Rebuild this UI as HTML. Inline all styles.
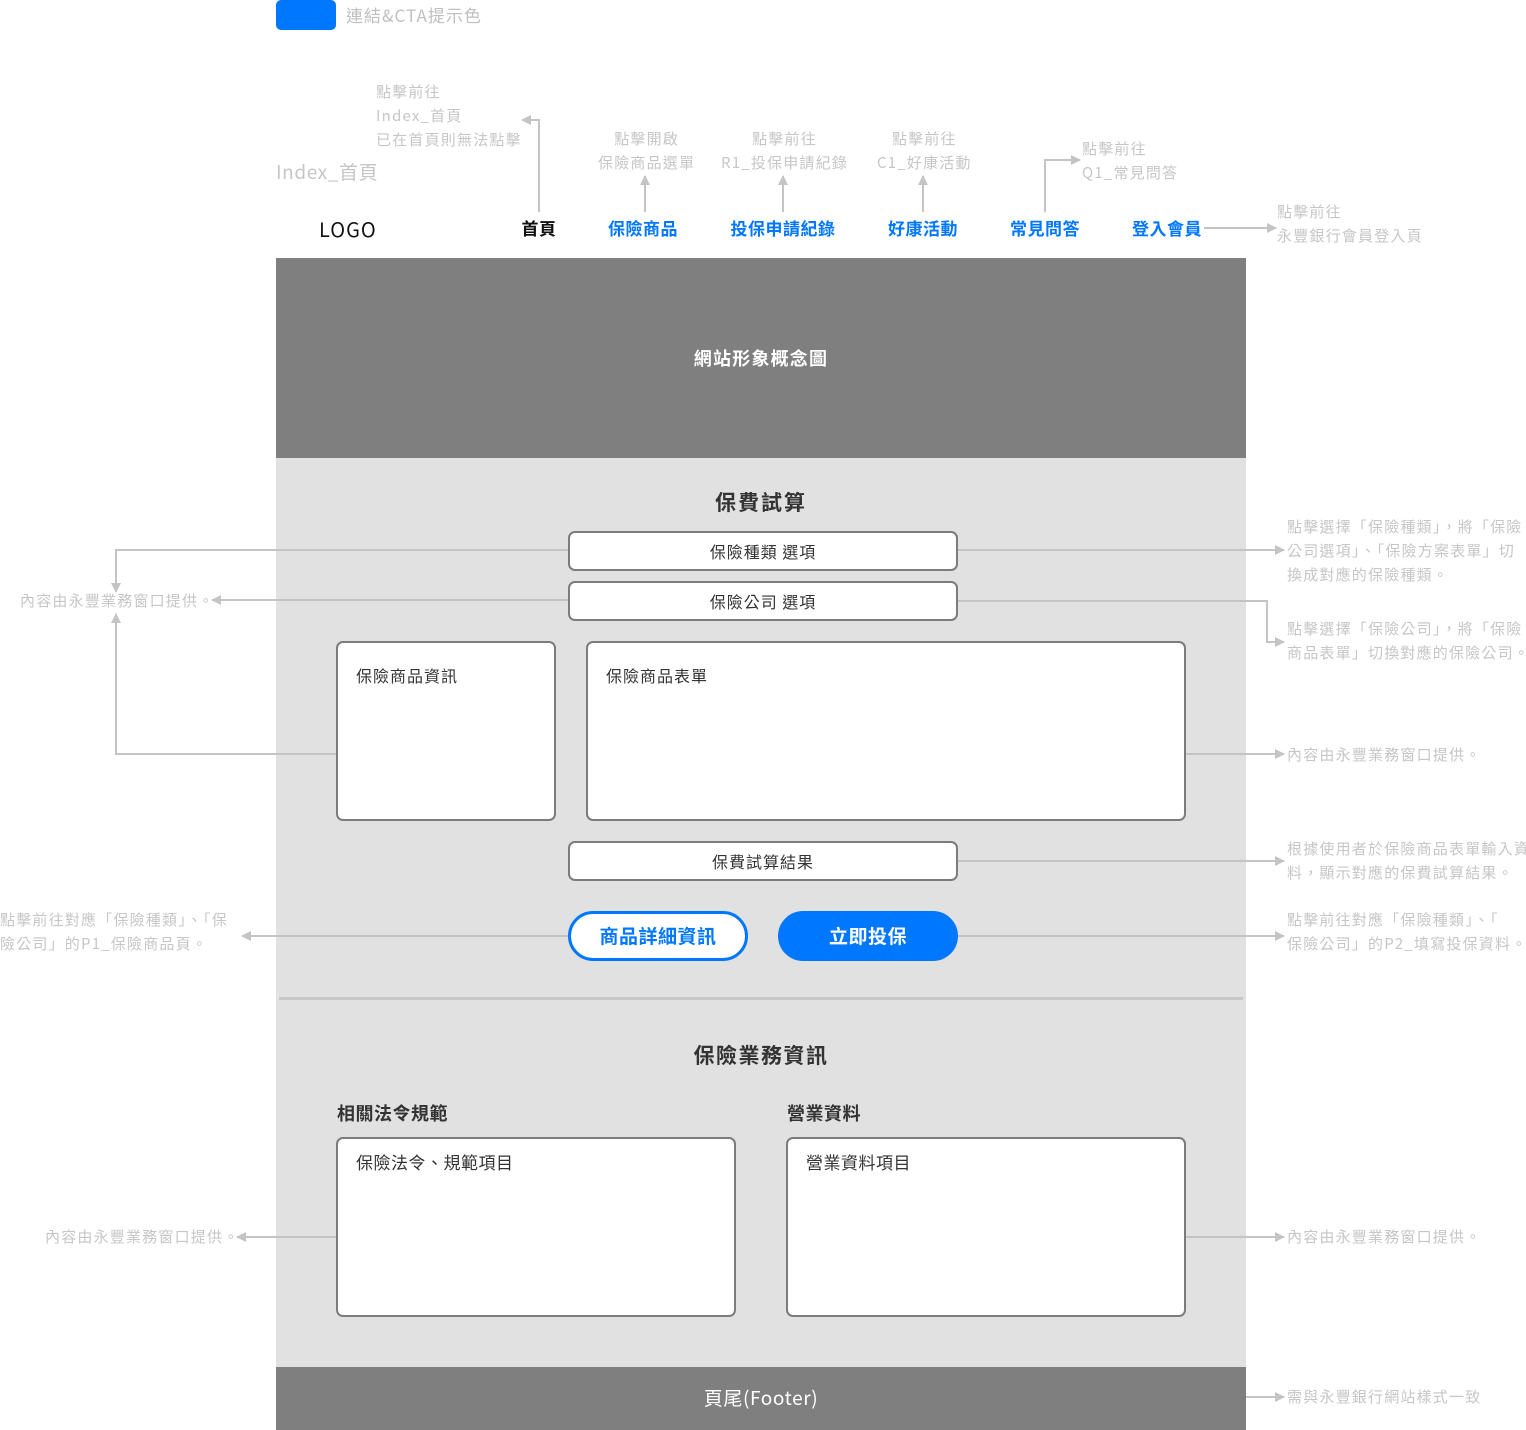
<!DOCTYPE html>
<html><head><meta charset="utf-8"><style>
*{margin:0;padding:0;box-sizing:border-box}
body{width:1526px;height:1430px;position:relative;background:#fff;font-family:"Noto Sans CJK TC","Liberation Sans",sans-serif;overflow:hidden}
.a{position:absolute;white-space:nowrap}
.n{color:#c6c6c6;font-size:15px;line-height:24px;letter-spacing:1.2px}
.nav{font-size:17px;font-weight:bold;color:#0077ff;top:216px;line-height:24px;transform:translateX(-50%);letter-spacing:.5px}
.box{position:absolute;background:#fff;border:2px solid #7c7c7c;border-radius:7px}
.sel{font-size:16px;color:#333;text-align:center;line-height:36px;letter-spacing:1px}
.bt{font-size:16px;color:#333;padding:20px 0 0 18px;line-height:24px;letter-spacing:1px}
</style></head><body>
<div class="a" style="left:276px;top:0;width:60px;height:30px;background:#0077ff;border-radius:5px"></div>
<div class="a" style="left:346px;top:4px;font-size:17px;color:#c0c0c0;line-height:22px;letter-spacing:1px">連結&amp;CTA提示色</div>
<div class="a n" style="left:376px;top:80px">點擊前往<br>Index_首頁<br>已在首頁則無法點擊</div>
<div class="a" style="left:276px;top:159px;font-size:19px;color:#c6c6c6;line-height:26px;letter-spacing:.6px">Index_首頁</div>
<div class="a n" style="left:598px;top:127px;text-align:center">點擊開啟<br>保險商品選單</div>
<div class="a n" style="left:721px;top:127px;text-align:center">點擊前往<br>R1_投保申請紀錄</div>
<div class="a n" style="left:877px;top:127px;text-align:center">點擊前往<br>C1_好康活動</div>
<div class="a n" style="left:1082px;top:137px">點擊前往<br>Q1_常見問答</div>
<div class="a n" style="left:1277px;top:200px">點擊前往<br>永豐銀行會員登入頁</div>
<div class="a" style="left:319px;top:216px;font-size:20px;color:#111;line-height:26px;letter-spacing:1px">LOGO</div>
<div class="a nav" style="left:539px;color:#111">首頁</div>
<div class="a nav" style="left:643px">保險商品</div>
<div class="a nav" style="left:783px">投保申請紀錄</div>
<div class="a nav" style="left:923px">好康活動</div>
<div class="a nav" style="left:1045px">常見問答</div>
<div class="a nav" style="left:1167px">登入會員</div>

<div class="a" style="left:276px;top:258px;width:970px;height:200px;background:#7f7f7f;color:#fff;font-size:18px;font-weight:bold;text-align:center;line-height:200px;letter-spacing:1.2px">網站形象概念圖</div>
<div class="a" style="left:276px;top:458px;width:970px;height:909px;background:#e1e1e1"></div>
<div class="a" style="left:279px;top:997px;width:964px;height:3px;background:#c8c8c8"></div>
<div class="a" style="left:276px;top:1367px;width:970px;height:63px;background:#7f7f7f;color:#fff;font-size:19px;text-align:center;line-height:62px;letter-spacing:.6px">頁尾(Footer)</div>

<svg class="a" style="left:0;top:0" width="1526" height="1430">
<defs><marker id="m" markerWidth="10" markerHeight="10" refX="9" refY="5" orient="auto" markerUnits="userSpaceOnUse"><path d="M0,0L10,5L0,10z" fill="#c4c4c4"/></marker></defs>
<g stroke="#c4c4c4" stroke-width="2" fill="none" marker-end="url(#m)">
<path d="M539,212V120H522"/>
<path d="M645,212V176"/>
<path d="M783,212V176"/>
<path d="M923,212V176"/>
<path d="M1045,212V160H1080"/>
<path d="M1204,228H1276"/>
<path d="M569,550H116V592"/>
<path d="M957,550H1284"/>
<path d="M569,600H212"/>
<path d="M957,601H1267V642H1284"/>
<path d="M337,754H116V614"/>
<path d="M1185,754H1284"/>
<path d="M957,861H1284"/>
<path d="M569,936H242"/>
<path d="M957,936H1284"/>
<path d="M337,1237H237"/>
<path d="M1185,1237H1284"/>
<path d="M1246,1397H1284"/>
</g></svg>

<div class="a n" style="left:20px;top:589px">內容由永豐業務窗口提供。</div>
<div class="a n" style="left:1287px;top:515px">點擊選擇「保險種類」，將「保險<br>公司選項」、「保險方案表單」切<br>換成對應的保險種類。</div>
<div class="a n" style="left:1287px;top:617px">點擊選擇「保險公司」，將「保險<br>商品表單」切換對應的保險公司。</div>
<div class="a n" style="left:1287px;top:743px">內容由永豐業務窗口提供。</div>
<div class="a n" style="left:1287px;top:837px">根據使用者於保險商品表單輸入資<br>料，顯示對應的保費試算結果。</div>
<div class="a n" style="left:1287px;top:908px">點擊前往對應「保險種類」、「<br>保險公司」的P2_填寫投保資料。</div>
<div class="a n" style="left:0;top:908px">點擊前往對應「保險種類」、「保<br>險公司」的P1_保險商品頁。</div>
<div class="a n" style="left:45px;top:1225px">內容由永豐業務窗口提供。</div>
<div class="a n" style="left:1287px;top:1225px">內容由永豐業務窗口提供。</div>
<div class="a n" style="left:1287px;top:1385px">需與永豐銀行網站樣式一致</div>

<div class="a" style="left:276px;top:488px;width:970px;text-align:center;font-size:21px;font-weight:bold;color:#333;line-height:28px;letter-spacing:2px">保費試算</div>
<div class="box sel" style="left:568px;top:531px;width:390px;height:40px">保險種類 選項</div>
<div class="box sel" style="left:568px;top:581px;width:390px;height:40px">保險公司 選項</div>
<div class="box bt" style="left:336px;top:641px;width:220px;height:180px">保險商品資訊</div>
<div class="box bt" style="left:586px;top:641px;width:600px;height:180px">保險商品表單</div>
<div class="box sel" style="left:568px;top:841px;width:390px;height:40px">保費試算結果</div>
<div class="a" style="left:568px;top:911px;width:180px;height:50px;border:3px solid #0077ff;border-radius:25px;background:#fff;color:#0077ff;font-size:19px;font-weight:bold;text-align:center;line-height:44px;letter-spacing:.5px">商品詳細資訊</div>
<div class="a" style="left:778px;top:911px;width:180px;height:50px;border-radius:25px;background:#0077ff;color:#fff;font-size:19px;font-weight:bold;text-align:center;line-height:50px;letter-spacing:.5px">立即投保</div>

<div class="a" style="left:276px;top:1041px;width:970px;text-align:center;font-size:21px;font-weight:bold;color:#333;line-height:28px;letter-spacing:1.5px">保險業務資訊</div>
<div class="a" style="left:337px;top:1101px;font-size:18px;font-weight:bold;color:#333;line-height:24px;letter-spacing:.5px">相關法令規範</div>
<div class="a" style="left:787px;top:1101px;font-size:18px;font-weight:bold;color:#333;line-height:24px;letter-spacing:.5px">營業資料</div>
<div class="box bt" style="left:336px;top:1137px;width:400px;height:180px;padding-top:11px;font-size:17px;letter-spacing:.5px">保險法令、規範項目</div>
<div class="box bt" style="left:786px;top:1137px;width:400px;height:180px;padding-top:11px;font-size:17px;letter-spacing:.5px">營業資料項目</div>
</body></html>
